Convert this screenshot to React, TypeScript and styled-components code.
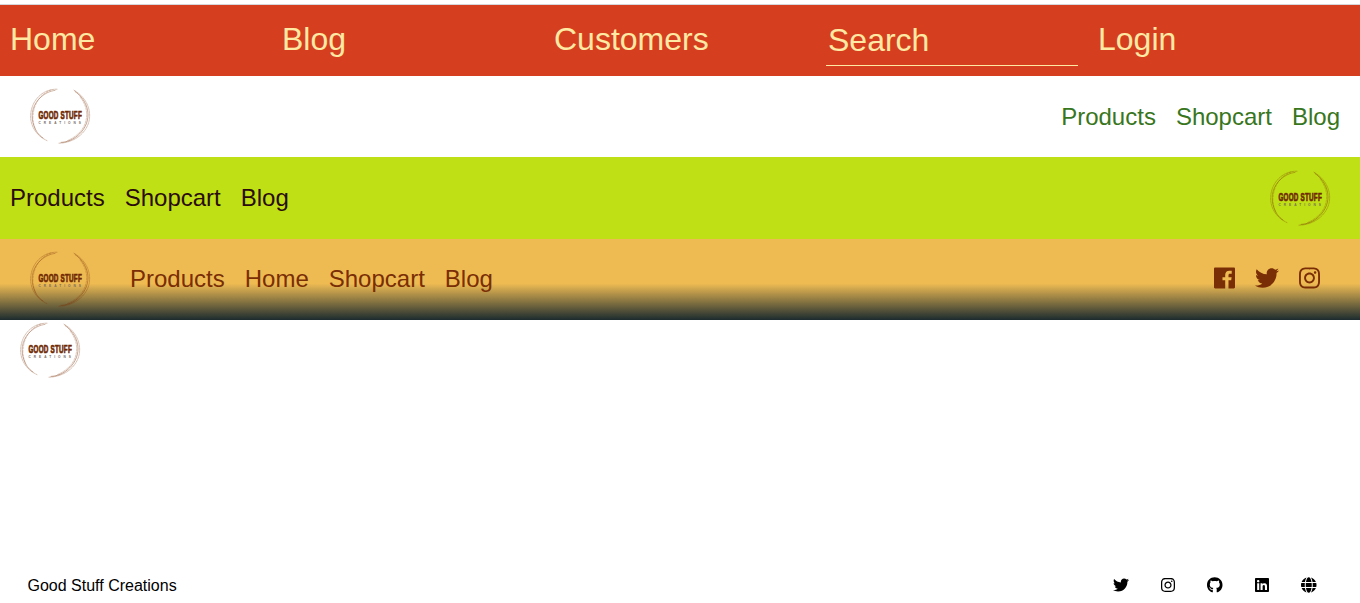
import React from "react";
import styled, { createGlobalStyle } from "styled-components";
import { FaTwitter, FaInstagram, FaGithub, FaLinkedin, FaGlobe } from "react-icons/fa";

const GlobalStyle = createGlobalStyle`
  * { box-sizing: border-box; }
  body {
    margin: 0;
    background: #fff;
    font-family: "Liberation Sans", Arial, sans-serif;
    color: #000;
  }
`;

const Page = styled.div`
  display: flex;
  flex-direction: column;
  height: 603px;
  overflow: hidden;
  padding-top: 4px;
`;

const TopBar = styled.nav`
  display: grid;
  grid-template-columns: repeat(5, 1fr);
  height: 72px;
  flex: none;
  border-top: 1px solid #d5d6da;
  background: #d63e20;
`;

const TopLink = styled.a`
  padding: 16px 10px 0;
  font-size: 32px;
  line-height: 37px;
  color: #ffe9a3;
`;

const SearchCell = styled.div`
  padding: 9px 10px 0;
`;

const SearchInput = styled.input`
  display: block;
  width: 100%;
  height: 52px;
  padding: 3px 2px 1px;
  border: 0;
  border-bottom: 1px solid #ffe9a3;
  background: transparent;
  font-family: inherit;
  font-size: 32px;
  color: #ffe9a3;
  outline: none;
  &::placeholder {
    color: #ffe9a3;
    opacity: 1;
  }
`;

const Bar = styled.nav<{ $height: number; $background: string; $color: string; $padding: string }>`
  display: flex;
  align-items: center;
  justify-content: space-between;
  flex: none;
  height: ${(p) => p.$height}px;
  padding: ${(p) => p.$padding};
  background: ${(p) => p.$background};
  color: ${(p) => p.$color};
`;

const Group = styled.div<{ $gap: number }>`
  display: flex;
  align-items: center;
  gap: ${(p) => p.$gap}px;
`;

const Links = styled.div`
  display: flex;
  gap: 20px;
  font-size: 24px;
  line-height: 28px;
`;

const Icons = styled.div<{ $size: number; $gap: number; $lift?: number }>`
  display: flex;
  align-items: center;
  gap: ${(p) => p.$gap}px;
  padding-bottom: ${(p) => p.$lift ?? 0}px;
  font-size: ${(p) => p.$size}px;
`;

const Icon = styled.span<{ $width: number }>`
  display: flex;
  width: ${(p) => p.$width}em;
  svg {
    width: 100%;
    height: 1em;
  }
`;

const LogoSvg = styled.svg<{ $lift: number }>`
  display: block;
  flex: none;
  width: 62px;
  height: 60px;
  margin-bottom: ${(p) => p.$lift}px;
  overflow: visible;
`;

const Content = styled.main`
  flex: 1;
  padding-left: 19px;
`;

const Footer = styled.footer`
  display: flex;
  align-items: center;
  justify-content: space-between;
  flex: none;
  height: 36px;
  padding: 0 43.5px 0 27.5px;
  font-size: 16px;
`;

const FooterText = styled.span`
  padding-top: 2px;
`;

const FacebookIcon = () => (
  <svg viewBox="0 0 448 512" fill="currentColor">
    <path d="M448 56.7v398.5c0 13.7-11.1 24.7-24.7 24.7H309.1V306.5h58.2l8.7-67.6h-67v-43.2c0-19.6 5.4-32.9 33.5-32.9h35.8v-60.5c-6.2-.8-27.4-2.7-52.2-2.7-51.6 0-87 31.5-87 89.4v49.9h-58.4v67.6h58.4V480H24.7C11.1 480 0 468.9 0 455.3V56.7C0 43.1 11.1 32 24.7 32h398.5c13.7 0 24.8 11.1 24.8 24.7z" />
  </svg>
);

const Logo = ({ lift = 0 }: { lift?: number }) => (
  <LogoSvg viewBox="0 0 62 60" $lift={lift}>
    <g fill="none" stroke="#7a2e05" strokeLinecap="round">
      <path d="M28 3.2C13 3 2 15 1.6 30C1.6 41 8 50 18 54.6" strokeWidth=".6" opacity=".5" strokeDasharray="2 1" />
      <path d="M26 4.4C14 6 3.4 17 3.2 29C3 40 8 48 14 52" strokeWidth=".6" opacity=".6" strokeDasharray="3 .8" />
      <path d="M22 4C12 8 4.6 16 3.8 32C4 36 5 40 7 44" strokeWidth=".5" opacity=".5" strokeDasharray="2 1.4" />
      <path d="M45 4.2C55 10 61.2 20 60.6 31C60 44 48 56.6 30 57.2" strokeWidth=".6" opacity=".5" strokeDasharray="2 1" />
      <path d="M46 5.5C54 11 59 20 59 29C59 43 46 55.8 32 56.4" strokeWidth=".6" opacity=".7" strokeDasharray="4 .7" />
      <path d="M51 11C56 17 58 24 57.6 30C57 42 49 50 38 54.8" strokeWidth=".5" opacity=".5" strokeDasharray="2 1.2" />
    </g>
    <g fill="#6f2803" fontFamily='"Liberation Sans", Arial, sans-serif' fontWeight="700">
      <text
        x="9.4"
        y="32.6"
        fontSize="10.4"
        letterSpacing=".4"
        textLength="43.6"
        lengthAdjust="spacingAndGlyphs"
        stroke="#6f2803"
        strokeWidth=".7"
      >
        GOOD STUFF
      </text>
      <text x="9.5" y="38" fontSize="3.2" textLength="42.5" fill="#75695f">
        CREATIONS
      </text>
    </g>
  </LogoSvg>
);

const App = () => (
  <>
    <GlobalStyle />
    <Page>
      <TopBar>
        <TopLink>Home</TopLink>
        <TopLink>Blog</TopLink>
        <TopLink>Customers</TopLink>
        <SearchCell>
          <SearchInput placeholder="Search" />
        </SearchCell>
        <TopLink>Login</TopLink>
      </TopBar>

      <Bar $height={81} $background="#fff" $color="#38761d" $padding="0 20px 0 29px">
        <Logo lift={1} />
        <Links>
          <a>Products</a>
          <a>Shopcart</a>
          <a>Blog</a>
        </Links>
      </Bar>

      <Bar $height={82} $background="#bfe015" $color="#2b0c0c" $padding="0 29px 0 10px">
        <Links>
          <a>Products</a>
          <a>Shopcart</a>
          <a>Blog</a>
        </Links>
        <Logo lift={1} />
      </Bar>

      <Bar
        $height={81}
        $background="linear-gradient(180deg, #eebb53 55%, #1c2b2f 100%)"
        $color="#7a2e05"
        $padding="0 40px 2px 29px"
      >
        <Group $gap={39}>
          <Logo lift={-1} />
          <Links>
            <a>Products</a>
            <a>Home</a>
            <a>Shopcart</a>
            <a>Blog</a>
          </Links>
        </Group>
        <Icons $size={24} $gap={20} $lift={2}>
          <Icon $width={0.875}><FacebookIcon /></Icon>
          <Icon $width={1}><FaTwitter /></Icon>
          <Icon $width={0.875}><FaInstagram /></Icon>
        </Icons>
      </Bar>

      <Content>
        <Logo />
      </Content>

      <Footer>
        <FooterText>Good Stuff Creations</FooterText>
        <Icons $size={16} $gap={32.2}>
          <Icon $width={1}><FaTwitter /></Icon>
          <Icon $width={0.875}><FaInstagram /></Icon>
          <Icon $width={0.96875}><FaGithub /></Icon>
          <Icon $width={0.875}><FaLinkedin /></Icon>
          <Icon $width={0.96875}><FaGlobe /></Icon>
        </Icons>
      </Footer>
    </Page>
  </>
);

export default App;
